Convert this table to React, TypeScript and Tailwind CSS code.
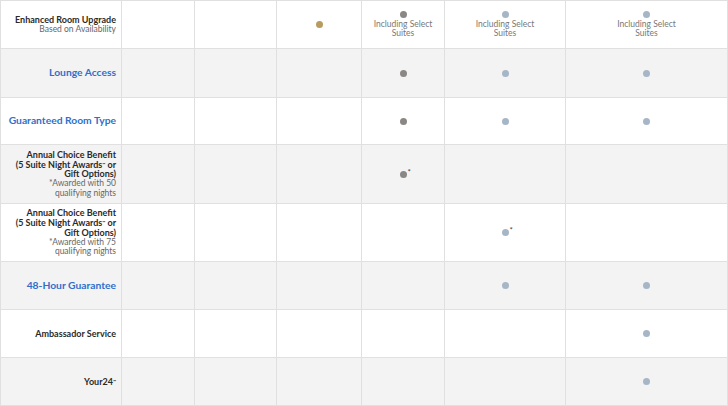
import React from "react";

type Dot = "gold" | "gray" | "blue" | null;

const dotClass: Record<string, string> = {
  gold: "bg-[#b99a5f]",
  gray: "bg-[#8a8784]",
  blue: "bg-[#a6b6c6]",
};

function Mark({ kind, note, star }: { kind: Dot; note?: boolean; star?: boolean }) {
  if (!kind) return null;
  return (
    <div className="flex flex-col items-center">
      <div className="relative">
        <span className={`block w-[7px] h-[7px] rounded-full ${dotClass[kind]}`} />
        {star && (
          <span className="absolute left-[8px] top-[-3px] text-[8px] leading-none text-[#444]">*</span>
        )}
      </div>
      {note && (
        <div className="mt-[2px] text-[8.5px] leading-[9.5px] text-[#777] text-center">
          Including Select
          <br />
          Suites
        </div>
      )}
    </div>
  );
}

type Row = {
  label: React.ReactNode;
  cells: { kind: Dot; note?: boolean; star?: boolean }[];
  shaded: boolean;
};

const E = { kind: null as Dot };

const Sub = ({ children }: { children: React.ReactNode }) => (
  <div className="text-[#666] text-[8.5px] leading-[9.6px]">{children}</div>
);

const rows: Row[] = [
  {
    label: (
      <>
        <div className="font-bold text-[#2a2a2a]">Enhanced Room Upgrade</div>
        <Sub>Based on Availability</Sub>
      </>
    ),
    cells: [E, E, { kind: "gold" }, { kind: "gray", note: true }, { kind: "blue", note: true }, { kind: "blue", note: true }],
    shaded: false,
  },
  {
    label: <div className="font-bold text-[#2f6fcb] text-[10.3px]">Lounge Access</div>,
    cells: [E, E, E, { kind: "gray" }, { kind: "blue" }, { kind: "blue" }],
    shaded: true,
  },
  {
    label: <div className="font-bold text-[#2f6fcb] text-[10.3px]">Guaranteed Room Type</div>,
    cells: [E, E, E, { kind: "gray" }, { kind: "blue" }, { kind: "blue" }],
    shaded: false,
  },
  {
    label: (
      <>
        <div className="font-bold text-[#2a2a2a]">
          Annual Choice Benefit
          <br />
          (5 Suite Night Awards<sup className="text-[4px]">™</sup> or
          <br />
          Gift Options)
        </div>
        <Sub>
          *Awarded with 50
          <br />
          qualifying nights
        </Sub>
      </>
    ),
    cells: [E, E, E, { kind: "gray", star: true }, E, E],
    shaded: true,
  },
  {
    label: (
      <>
        <div className="font-bold text-[#2a2a2a]">
          Annual Choice Benefit
          <br />
          (5 Suite Night Awards<sup className="text-[4px]">™</sup> or
          <br />
          Gift Options)
        </div>
        <Sub>
          *Awarded with 75
          <br />
          qualifying nights
        </Sub>
      </>
    ),
    cells: [E, E, E, E, { kind: "blue", star: true }, E],
    shaded: false,
  },
  {
    label: <div className="font-bold text-[#2f6fcb] text-[10.3px]">48-Hour Guarantee</div>,
    cells: [E, E, E, E, { kind: "blue" }, { kind: "blue" }],
    shaded: true,
  },
  {
    label: <div className="font-bold text-[#2a2a2a]">Ambassador Service</div>,
    cells: [E, E, E, E, E, { kind: "blue" }],
    shaded: false,
  },
  {
    label: (
      <div className="font-bold text-[#2a2a2a]">
        Your24<sup className="text-[4px]">™</sup>
      </div>
    ),
    cells: [E, E, E, E, E, { kind: "blue" }],
    shaded: true,
  },
];

export default function App() {
  return (
    <div
      className="w-[728px] h-[406px] bg-white overflow-hidden"
      style={{ fontFamily: "Lato, 'Open Sans', Arial, sans-serif" }}
    >
      <div className="grid grid-cols-[120px_72px_81px_84px_82px_120px_161px] grid-rows-[47px_48px_46px_58px_57px_47px_47px_47px] gap-px p-px bg-[#e0e0e0] w-[728px]">
        {rows.map((r, i) => {
          const bg = r.shaded ? "bg-[#f3f3f3]" : "bg-white";
          return (
            <React.Fragment key={i}>
              <div className={`${bg} flex flex-col justify-center items-end text-right pr-[5px] text-[9px] leading-[9.8px]`}>
                {r.label}
              </div>
              {r.cells.map((c, j) => (
                <div key={j} className={`${bg} flex items-center justify-center`}>
                  <Mark kind={c.kind} note={c.note} star={c.star} />
                </div>
              ))}
            </React.Fragment>
          );
        })}
      </div>
    </div>
  );
}
